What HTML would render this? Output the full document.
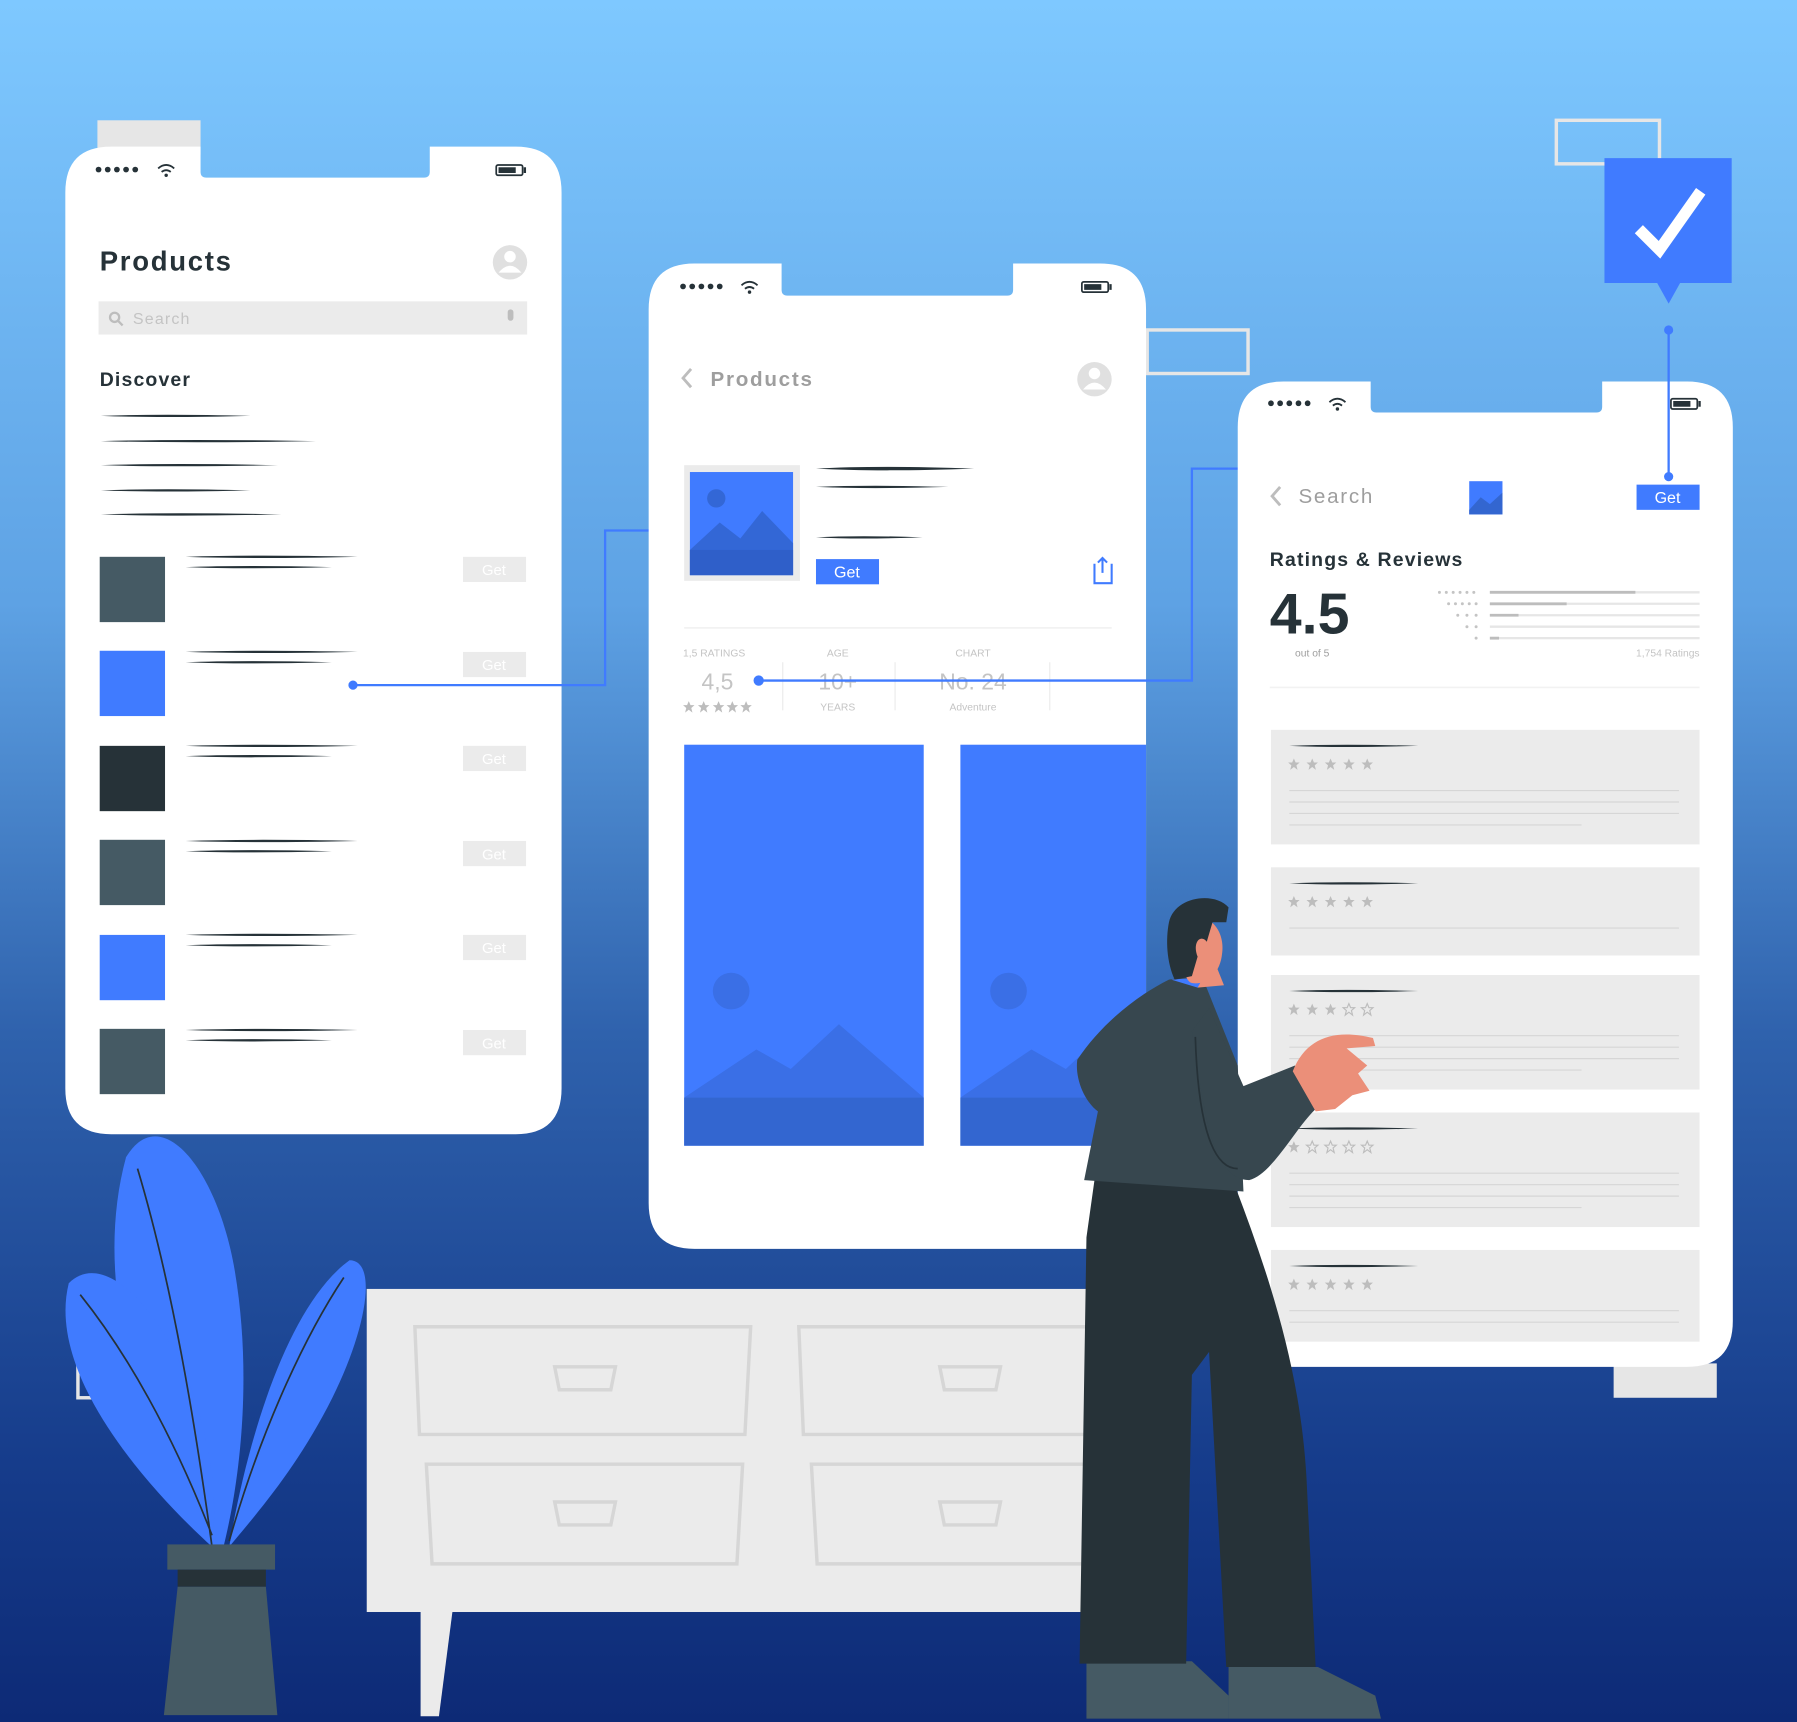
<!DOCTYPE html>
<html><head><meta charset="utf-8"><style>
html,body{margin:0;padding:0;width:1797px;height:1722px;overflow:hidden}
svg{display:block}
text{font-family:"Liberation Sans",sans-serif}
</style></head><body>
<svg width="1797" height="1722" viewBox="0 0 1568 1503" preserveAspectRatio="none" xmlns="http://www.w3.org/2000/svg">
<defs>
<linearGradient id="bg" x1="0" y1="0" x2="0" y2="1">
<stop offset="0" stop-color="#7ec8ff"/><stop offset="0.35" stop-color="#5ea2e4"/><stop offset="0.6" stop-color="#2f62ad"/><stop offset="0.85" stop-color="#163c8b"/><stop offset="1" stop-color="#0d2a76"/>
</linearGradient>
<g id="ln"><path d="M0 0 Q60 -2 150 0 Q60 2 0 0Z" fill="#263238"/></g>
<g id="st"><path d="M0 -5 L1.5 -1.5 L5 -1.5 L2.2 1 L3.2 5 L0 2.5 L-3.2 5 L-2.2 1 L-5 -1.5 L-1.5 -1.5Z" fill="#bdbdbd"/></g>
<g id="sto"><path d="M0 -5 L1.5 -1.5 L5 -1.5 L2.2 1 L3.2 5 L0 2.5 L-3.2 5 L-2.2 1 L-5 -1.5 L-1.5 -1.5Z" fill="none" stroke="#bdbdbd"/></g>
</defs>
<rect width="1568" height="1503" fill="url(#bg)"/>

<!-- decorative boxes -->
<rect x="85" y="105" width="90" height="30" fill="#e6e6e6"/>
<rect x="1358" y="105" width="90" height="38" fill="none" stroke="#e6e6e6" stroke-width="3"/>
<rect x="1001" y="288" width="88" height="38" fill="none" stroke="#e6e6e6" stroke-width="3"/>
<rect x="1408" y="1190" width="90" height="30" fill="#e6e6e6"/>

<!-- Phone 1 -->
<path d="M97 128 H175 V150 Q175 155 180 155 H370 Q375 155 375 150 V128 H450 Q490 128 490 168 V950 Q490 990 450 990 H97 Q57 990 57 950 V168 Q57 128 97 128Z" fill="#fff"/>
<g fill="#263238">
<circle cx="86" cy="148" r="2.5"/><circle cx="94" cy="148" r="2.5"/><circle cx="102" cy="148" r="2.5"/><circle cx="110" cy="148" r="2.5"/><circle cx="118" cy="148" r="2.5"/>
<rect x="433" y="144" width="23" height="9" rx="1.5" fill="none" stroke="#263238" stroke-width="1.5"/><rect x="435" y="146" width="15" height="5"/><rect x="457" y="146" width="2" height="5"/>
</g>
<path d="M138 147 Q145 141 152 147 M141 150 Q145 147 149 150" stroke="#263238" stroke-width="1.6" fill="none"/><circle cx="145" cy="153" r="1.5" fill="#263238"/>
<text x="87" y="236" font-size="24" font-weight="bold" fill="#263238" letter-spacing="1.5">Products</text>
<circle cx="445" cy="229" r="15" fill="#e0e0e0"/><circle cx="445" cy="224" r="5" fill="#fff"/><path d="M435 238 Q445 226 455 238" fill="#fff"/>
<rect x="86" y="263" width="374" height="29" fill="#ebebeb"/>
<circle cx="100" cy="277" r="4" fill="none" stroke="#bdbdbd" stroke-width="2"/><line x1="103" y1="280" x2="107" y2="284" stroke="#bdbdbd" stroke-width="2"/>
<text x="116" y="283" font-size="14" fill="#c4c4c4" letter-spacing="1">Search</text>
<rect x="443" y="270" width="5" height="10" rx="2.5" fill="#bdbdbd"/>
<text x="87" y="337" font-size="17" font-weight="bold" fill="#263238" letter-spacing="1">Discover</text>
<use href="#ln" transform="translate(88,363) scale(0.87,1)"/>
<use href="#ln" transform="translate(88,385) scale(1.25,1)"/>
<use href="#ln" transform="translate(88,406) scale(1.03,1)"/>
<use href="#ln" transform="translate(88,428) scale(0.87,1)"/>
<use href="#ln" transform="translate(88,449) scale(1.05,1)"/>
<g>
<rect x="87" y="486" width="57" height="57" fill="#455a64"/>
<rect x="87" y="568" width="57" height="57" fill="#407bff"/>
<rect x="87" y="651" width="57" height="57" fill="#263238"/>
<rect x="87" y="733" width="57" height="57" fill="#455a64"/>
<rect x="87" y="816" width="57" height="57" fill="#407bff"/>
<rect x="87" y="898" width="57" height="57" fill="#455a64"/>
</g>
<g id="row1">
<use href="#ln" transform="translate(162,486)"/>
<use href="#ln" transform="translate(162,495) scale(0.85,1)"/>
<rect x="404" y="486" width="55" height="22" fill="#ebebeb"/><text x="431" y="502" font-size="13" fill="#fff" text-anchor="middle">Get</text>
</g>
<use href="#row1" transform="translate(0,83)"/>
<use href="#row1" transform="translate(0,165)"/>
<use href="#row1" transform="translate(0,248)"/>
<use href="#row1" transform="translate(0,330)"/>
<use href="#row1" transform="translate(0,413)"/>

<!-- connector lines -->
<path d="M308 598 H528 V463 H577" fill="none" stroke="#407bff" stroke-width="2"/>
<circle cx="308" cy="598" r="4" fill="#407bff"/><circle cx="577" cy="463" r="4" fill="#407bff"/>

<!-- Phone 2 -->
<path d="M606 230 H682 V253 Q682 258 687 258 H879 Q884 258 884 253 V230 H960 Q1000 230 1000 270 V1090 H606 Q566 1090 566 1050 V270 Q566 230 606 230Z" fill="#fff"/>
<g fill="#263238">
<circle cx="596" cy="250" r="2.5"/><circle cx="604" cy="250" r="2.5"/><circle cx="612" cy="250" r="2.5"/><circle cx="620" cy="250" r="2.5"/><circle cx="628" cy="250" r="2.5"/>
<rect x="944" y="246" width="23" height="9" rx="1.5" fill="none" stroke="#263238" stroke-width="1.5"/><rect x="946" y="248" width="15" height="5"/><rect x="968" y="248" width="2" height="5"/>
</g>
<path d="M647 249 Q654 243 661 249 M650 252 Q654 249 658 252" stroke="#263238" stroke-width="1.6" fill="none"/><circle cx="654" cy="255" r="1.5" fill="#263238"/>
<path d="M603 322 L596 330 L603 338" fill="none" stroke="#bdbdbd" stroke-width="2.5"/>
<text x="620" y="337" font-size="18" fill="#9e9e9e" letter-spacing="1.5" font-weight="bold">Products</text>
<circle cx="955" cy="331" r="15" fill="#e0e0e0"/><circle cx="955" cy="326" r="5" fill="#fff"/><path d="M945 340 Q955 328 965 340" fill="#fff"/>
<rect x="597" y="406" width="101" height="101" fill="#ebebeb"/>
<rect x="602" y="412" width="90" height="90" fill="#407bff"/>
<circle cx="625" cy="435" r="8" fill="#3367d6"/>
<path d="M602 480 L628 456 L646 470 L665 446 L692 474 V502 H602Z" fill="#3367d6"/>
<rect x="602" y="480" width="90" height="22" fill="#2f5fc9"/>
<use href="#ln" transform="translate(712,409) scale(0.92,1.5)"/>
<use href="#ln" transform="translate(712,425) scale(0.77,1)"/>
<use href="#ln" transform="translate(712,469) scale(0.62,1)"/>
<rect x="712" y="488" width="55" height="22" fill="#407bff"/><text x="739" y="504" font-size="14" fill="#fff" text-anchor="middle">Get</text>
<path d="M955 492 V509 H970 V492 M959 494 M962 500 V487 M958 491 L962 487 L966 491" fill="none" stroke="#407bff" stroke-width="1.8"/>
<line x1="597" y1="548" x2="970" y2="548" stroke="#f2f2f2" stroke-width="1.5"/>
<text x="596" y="573" font-size="9" fill="#c4c4c4">1,5 RATINGS</text>
<text x="626" y="602" font-size="20" fill="#c4c4c4" text-anchor="middle">4,5</text>
<g transform="translate(601,617)"><use href="#st"/><use href="#st" x="13"/><use href="#st" x="26"/><use href="#st" x="38"/><use href="#st" x="50"/></g>
<line x1="683" y1="578" x2="683" y2="620" stroke="#ebebeb"/>
<line x1="781" y1="578" x2="781" y2="620" stroke="#ebebeb"/>
<line x1="916" y1="578" x2="916" y2="620" stroke="#ebebeb"/>
<text x="731" y="573" font-size="9" fill="#c4c4c4" text-anchor="middle">AGE</text>
<text x="731" y="602" font-size="20" fill="#c4c4c4" text-anchor="middle">10+</text>
<text x="731" y="620" font-size="9" fill="#c4c4c4" text-anchor="middle">YEARS</text>
<text x="849" y="573" font-size="9" fill="#c4c4c4" text-anchor="middle">CHART</text>
<text x="849" y="602" font-size="20" fill="#c4c4c4" text-anchor="middle">No. 24</text>
<text x="849" y="620" font-size="9" fill="#c4c4c4" text-anchor="middle">Adventure</text>
<rect x="597" y="650" width="209" height="350" fill="#407bff"/>
<circle cx="638" cy="865" r="16" fill="#3a6fe6"/>
<path d="M597 958 L660 916 L690 933 L732 894 L806 958Z" fill="#3a6fe6"/>
<rect x="597" y="958" width="209" height="42" fill="#3366d0"/>
<rect x="838" y="650" width="162" height="350" fill="#407bff"/>
<circle cx="880" cy="865" r="16" fill="#3a6fe6"/>
<path d="M838 958 L900 916 L930 933 L960 905 L1000 930 V958Z" fill="#3a6fe6"/>
<rect x="838" y="958" width="162" height="42" fill="#3366d0"/>
<!-- connector 2 -->
<path d="M662 594 H1040 V409 H1086" fill="none" stroke="#407bff" stroke-width="2"/>
<circle cx="662" cy="594" r="4.5" fill="#407bff"/><circle cx="1086" cy="409" r="4" fill="#407bff"/>

<!-- dresser -->
<rect x="320" y="1125" width="640" height="282" fill="#ebebeb"/>
<path d="M367 1405 H395 L383 1498 H367Z" fill="#ebebeb"/>
<path d="M362 1158 H655 L650 1252 H366Z M697 1158 H960 V1252 H701Z M372 1278 H648 L643 1365 H377Z M708 1278 H960 V1365 H713Z" fill="none" stroke="#d6d6d6" stroke-width="3"/>
<path d="M484 1193 H537 L533 1213 H488Z M820 1193 H873 L869 1213 H824Z M484 1311 H537 L533 1331 H488Z M820 1311 H873 L869 1331 H824Z" fill="none" stroke="#d6d6d6" stroke-width="3"/>

<!-- Phone 3 -->
<path d="M1120 333 H1196 V355 Q1196 360 1201 360 H1393 Q1398 360 1398 355 V333 H1472 Q1512 333 1512 373 V1153 Q1512 1193 1472 1193 H1080 V373 Q1080 333 1120 333Z" fill="#fff"/>
<g fill="#263238">
<circle cx="1109" cy="352" r="2.5"/><circle cx="1117" cy="352" r="2.5"/><circle cx="1125" cy="352" r="2.5"/><circle cx="1133" cy="352" r="2.5"/><circle cx="1141" cy="352" r="2.5"/>
<rect x="1458" y="348" width="23" height="9" rx="1.5" fill="none" stroke="#263238" stroke-width="1.5"/><rect x="1460" y="350" width="15" height="5"/><rect x="1482" y="350" width="2" height="5"/>
</g>
<path d="M1160 351 Q1167 345 1174 351 M1163 354 Q1167 351 1171 354" stroke="#263238" stroke-width="1.6" fill="none"/><circle cx="1167" cy="357" r="1.5" fill="#263238"/>
<path d="M1117 425 L1110 433 L1117 441" fill="none" stroke="#bdbdbd" stroke-width="2.5"/>
<text x="1133" y="439" font-size="18" fill="#9e9e9e" letter-spacing="1.5">Search</text>
<rect x="1282" y="420" width="29" height="29" fill="#407bff"/><path d="M1282 445 L1292 434 L1300 440 L1311 430 V449 H1282Z" fill="#3366d0"/>
<rect x="1428" y="423" width="55" height="22" fill="#407bff"/><text x="1455" y="439" font-size="14" fill="#fff" text-anchor="middle">Get</text>
<text x="1108" y="494" font-size="17" font-weight="bold" fill="#263238" letter-spacing="1">Ratings &amp; Reviews</text>
<text x="1108" y="553" font-size="50" font-weight="bold" fill="#263238">4.5</text>
<text x="1130" y="573" font-size="9" fill="#9e9e9e">out of 5</text>
<g fill="#c4c4c4">
<circle cx="1256" cy="517" r="1.3"/><circle cx="1262" cy="517" r="1.3"/><circle cx="1268" cy="517" r="1.3"/><circle cx="1274" cy="517" r="1.3"/><circle cx="1280" cy="517" r="1.3"/><circle cx="1286" cy="517" r="1.3"/>
<circle cx="1264" cy="527" r="1.3"/><circle cx="1270" cy="527" r="1.3"/><circle cx="1276" cy="527" r="1.3"/><circle cx="1282" cy="527" r="1.3"/><circle cx="1288" cy="527" r="1.3"/>
<circle cx="1272" cy="537" r="1.3"/><circle cx="1280" cy="537" r="1.3"/><circle cx="1288" cy="537" r="1.3"/>
<circle cx="1280" cy="547" r="1.3"/><circle cx="1288" cy="547" r="1.3"/><circle cx="1288" cy="557" r="1.3"/>
</g>
<g stroke="#e6e6e6" stroke-width="2"><line x1="1300" y1="517" x2="1483" y2="517"/><line x1="1300" y1="527" x2="1483" y2="527"/><line x1="1300" y1="537" x2="1483" y2="537"/><line x1="1300" y1="547" x2="1483" y2="547"/><line x1="1300" y1="557" x2="1483" y2="557"/></g>
<g stroke="#bdbdbd" stroke-width="2.5"><line x1="1300" y1="517" x2="1427" y2="517"/><line x1="1300" y1="527" x2="1367" y2="527"/><line x1="1300" y1="537" x2="1325" y2="537"/><line x1="1300" y1="557" x2="1308" y2="557"/></g>
<text x="1483" y="573" font-size="9" fill="#c4c4c4" text-anchor="end">1,754 Ratings</text>
<line x1="1108" y1="600" x2="1483" y2="600" stroke="#f2f2f2" stroke-width="1.5"/>
<g>
<rect x="1109" y="637" width="374" height="100" fill="#ebebeb"/>
<use href="#ln" transform="translate(1125,651) scale(0.75,1)"/>
<g transform="translate(1129,667)"><use href="#st"/><use href="#st" x="16"/><use href="#st" x="32"/><use href="#st" x="48"/><use href="#st" x="64"/></g>
<g stroke="#d6d6d6"><line x1="1125" y1="690" x2="1465" y2="690"/><line x1="1125" y1="700" x2="1465" y2="700"/><line x1="1125" y1="710" x2="1465" y2="710"/><line x1="1125" y1="720" x2="1380" y2="720"/></g>
</g>
<rect x="1109" y="757" width="374" height="77" fill="#ebebeb"/>
<use href="#ln" transform="translate(1125,771) scale(0.75,1)"/>
<g transform="translate(1129,787)"><use href="#st"/><use href="#st" x="16"/><use href="#st" x="32"/><use href="#st" x="48"/><use href="#st" x="64"/></g>
<g stroke="#d6d6d6"><line x1="1125" y1="810" x2="1465" y2="810"/></g>
<rect x="1109" y="851" width="374" height="100" fill="#ebebeb"/>
<use href="#ln" transform="translate(1125,865) scale(0.75,1)"/>
<g transform="translate(1129,881)"><use href="#st"/><use href="#st" x="16"/><use href="#st" x="32"/><use href="#sto" x="48"/><use href="#sto" x="64"/></g>
<g stroke="#d6d6d6"><line x1="1125" y1="904" x2="1465" y2="904"/><line x1="1125" y1="914" x2="1465" y2="914"/><line x1="1125" y1="924" x2="1465" y2="924"/><line x1="1125" y1="934" x2="1380" y2="934"/></g>
<rect x="1109" y="971" width="374" height="100" fill="#ebebeb"/>
<use href="#ln" transform="translate(1125,985) scale(0.75,1)"/>
<g transform="translate(1129,1001)"><use href="#st"/><use href="#sto" x="16"/><use href="#sto" x="32"/><use href="#sto" x="48"/><use href="#sto" x="64"/></g>
<g stroke="#d6d6d6"><line x1="1125" y1="1024" x2="1465" y2="1024"/><line x1="1125" y1="1034" x2="1465" y2="1034"/><line x1="1125" y1="1044" x2="1465" y2="1044"/><line x1="1125" y1="1054" x2="1380" y2="1054"/></g>
<rect x="1109" y="1091" width="374" height="80" fill="#ebebeb"/>
<use href="#ln" transform="translate(1125,1105) scale(0.75,1)"/>
<g transform="translate(1129,1121)"><use href="#st"/><use href="#st" x="16"/><use href="#st" x="32"/><use href="#st" x="48"/><use href="#st" x="64"/></g>
<g stroke="#d6d6d6"><line x1="1125" y1="1144" x2="1465" y2="1144"/><line x1="1125" y1="1154" x2="1465" y2="1154"/></g>

<!-- checkmark badge -->
<path d="M1456 416 V288" stroke="#407bff" stroke-width="2"/>
<circle cx="1456" cy="416" r="4" fill="#407bff"/><circle cx="1456" cy="288" r="4" fill="#407bff"/>
<path d="M1400 138 H1511 V247 H1466 L1456 265 L1446 247 H1400Z" fill="#407bff"/>
<path d="M1430 200 L1448 218 L1484 167" fill="none" stroke="#fff" stroke-width="10" stroke-linejoin="miter"/>

<!-- plant -->
<rect x="120" y="1135" width="30" height="28" fill="none" stroke="#e6e6e6" stroke-width="3"/>
<rect x="68" y="1180" width="30" height="40" fill="none" stroke="#e6e6e6" stroke-width="3"/>
<path d="M185 1350 C120 1250 80 1120 110 1010 C140 960 190 1020 205 1110 C220 1200 210 1290 195 1350Z" fill="#407bff"/>
<path d="M185 1350 C130 1300 40 1200 60 1120 C90 1090 140 1140 170 1220 C185 1270 190 1310 185 1350Z" fill="#407bff"/>
<path d="M200 1350 C215 1260 250 1140 305 1100 C330 1100 320 1160 290 1220 C260 1280 225 1320 200 1350Z" fill="#407bff"/>
<path d="M185 1350 C170 1240 150 1120 120 1020 M185 1340 C150 1250 110 1180 70 1130 M200 1345 C230 1240 270 1160 300 1115" fill="none" stroke="#263238" stroke-width="1.5"/>
<rect x="146" y="1348" width="94" height="22" fill="#455a64"/>
<rect x="155" y="1370" width="77" height="15" fill="#263238"/>
<path d="M155 1385 H232 L242 1497 H143Z" fill="#455a64"/>

<!-- person -->
<path d="M948 1450 H1040 L1072 1480 V1500 H948Z" fill="#455a64"/>
<path d="M1072 1455 H1150 L1200 1480 L1205 1500 H1072Z" fill="#455a64"/>
<path d="M955 1030 L1078 1036 C1110 1120 1135 1200 1140 1290 L1148 1455 H1070 L1055 1180 L1040 1200 L1035 1452 H942 L948 1080Z" fill="#263238"/>
<path d="M1020 855 L1048 850 L1080 930 L1085 1040 L946 1030 L958 970 C945 960 938 940 940 925 C960 895 990 870 1020 855Z" fill="#37474f"/>
<path d="M1040 900 C1050 960 1055 1030 1090 1030 C1110 1025 1130 985 1148 968 L1130 930 L1085 948 L1055 880Z" fill="#37474f"/>
<path d="M1043 905 C1045 970 1055 1020 1080 1020" fill="none" stroke="#263238" stroke-width="1.5"/>
<path d="M1128 935 C1140 905 1165 898 1198 906 L1200 913 L1175 915 L1193 930 L1185 937 L1195 952 L1180 956 L1165 968 L1148 970Z" fill="#eb8f79"/>
<path d="M1030 842 L1060 840 L1068 860 L1045 862Z" fill="#eb8f79"/>
<path d="M1022 855 L1045 862 L1050 853" fill="#407bff"/>
<path d="M1040 800 C1058 798 1070 815 1066 835 C1063 853 1050 860 1040 858 C1030 855 1030 820 1040 800Z" fill="#eb8f79"/>
<path d="M1020 805 C1025 782 1060 778 1072 792 L1070 805 L1058 805 L1053 822 C1048 815 1040 822 1045 835 L1040 852 L1025 855 C1018 840 1017 820 1020 805Z" fill="#263238"/>
</svg>
</body></html>
